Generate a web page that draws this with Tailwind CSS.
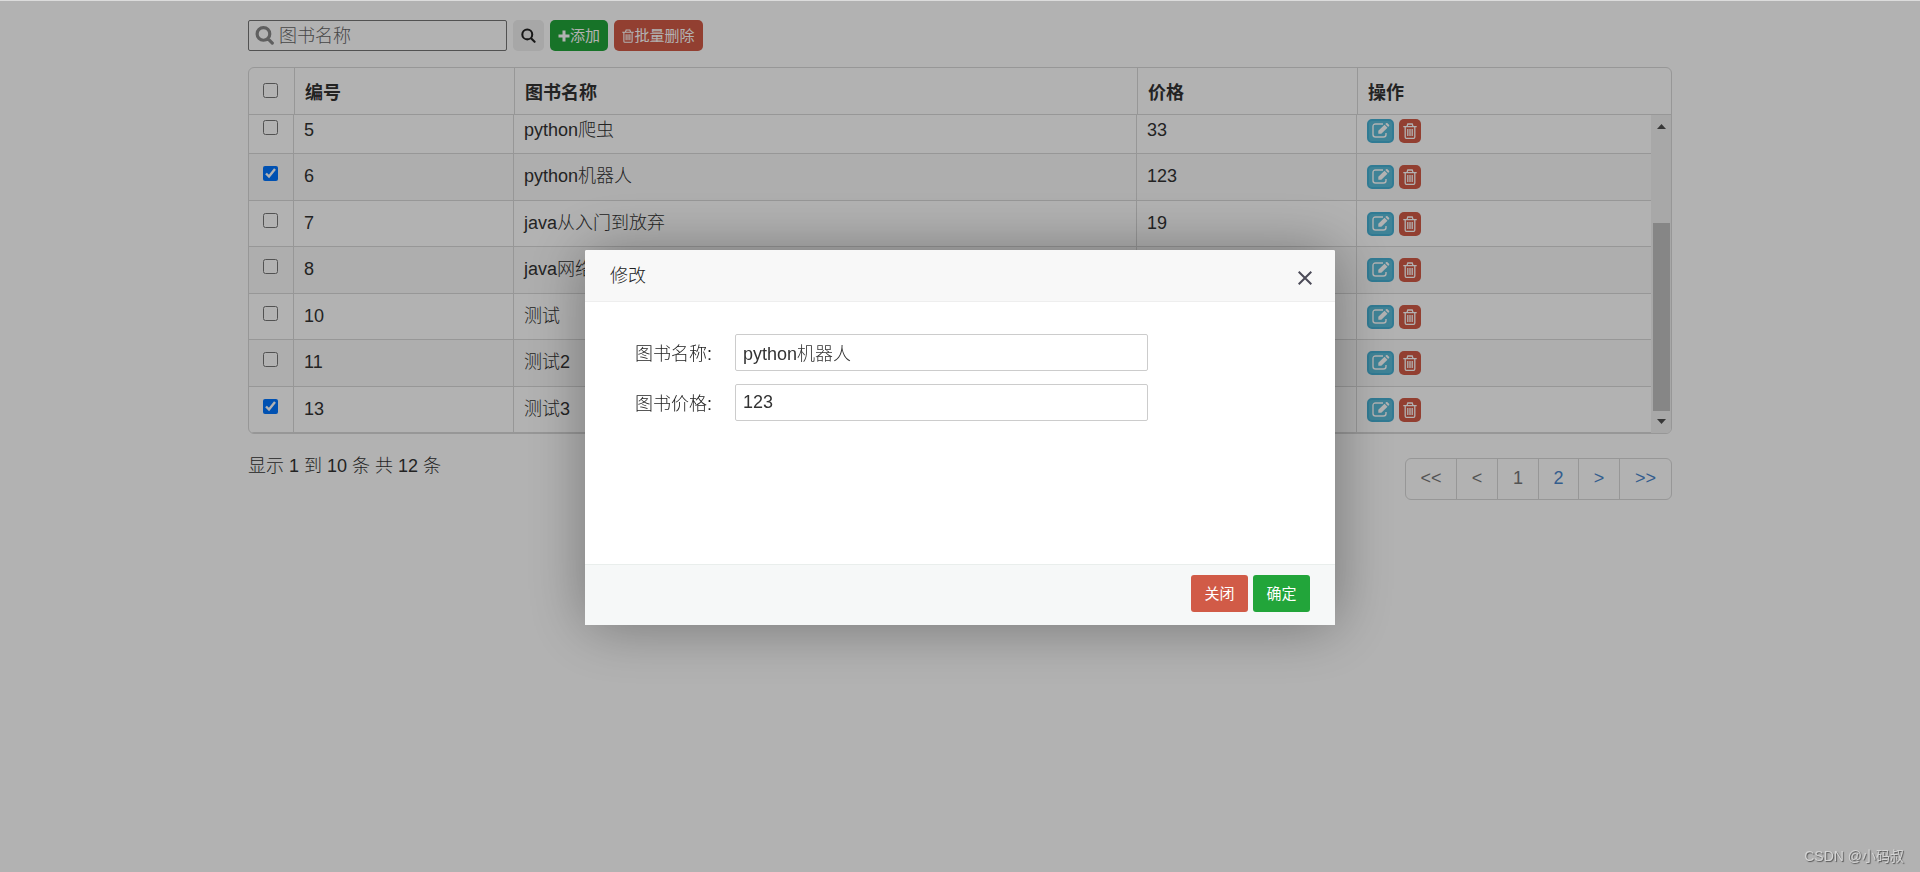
<!DOCTYPE html>
<html lang="zh-CN">
<head>
<meta charset="utf-8">
<meta name="viewport" content="width=device-width, initial-scale=1">
<title>图书管理</title>
<script src="https://cdn.jsdelivr.net/npm/@tailwindcss/browser@4"></script>
</head>
<body class="min-h-screen border-t border-[#dcdcdc] bg-white font-['Liberation_Sans','Noto_Sans_CJK_SC',sans-serif] text-lg leading-6 text-[#333]">

<svg class="hidden" aria-hidden="true">
  <symbol id="search" viewBox="0 0 18 18"><path fill="none" stroke="currentColor" stroke-width="3" stroke-linecap="round" d="M14 7.500a6 6 0 1 1-12 0 6 6 0 0 1 12 0zM12.400 12.200l4 4"/></symbol>
  <symbol id="search-thin" viewBox="0 0 16 16"><path fill="none" stroke="currentColor" stroke-width="2.200" stroke-linecap="round" d="M12 6.800a5.300 5.300 0 1 1-10.600 0 5.300 5.300 0 0 1 10.600 0zM10.700 10.900l3.800 3.800"/></symbol>
  <symbol id="plus" viewBox="0 0 12 12"><path fill="currentColor" d="M4.500.5h3v4h4v3h-4v4h-3v-4h-4v-3h4z"/></symbol>
  <symbol id="trash" viewBox="0 0 14 16"><path fill="none" stroke="currentColor" stroke-width="1.300" d="M.3 3.600h13.400M4 3.400 4.800 1h4.400l.8 2.400M2.200 3.600V14q0 1.300 1.200 1.300h7.200q1.200 0 1.200-1.300V3.600M4.800 6v7M7 6v7M9.200 6v7"/></symbol>
  <symbol id="edit" viewBox="0 0 18 15"><path fill="none" stroke="currentColor" stroke-width="1.400" d="M11 1H3.500Q1 1 1 3.500v8Q1 14 3.500 14h8q2.500 0 2.500-2.500V10"/><path fill="currentColor" d="m6.300 7.700 6.200-6 3 3-6.200 6.100h-3zM13.300 1l.8-.8q.7-.5 1.400 0l1.500 1.500q.6.700 0 1.400l-.8.800z"/></symbol>
</svg>

<main class="mx-auto w-full max-w-[1424px] pt-[19px]">
  <form class="flex items-center gap-[6px]">
    <label class="flex h-[31px] w-[259px] items-center gap-[5px] rounded-xs border border-[#767676] px-[6px] text-[#888]">
      <svg class="size-[19px] shrink-0"><use href="#search"/></svg>
      <input type="text" aria-label="图书名称" placeholder="图书名称" class="min-w-0 flex-1 font-light outline-none placeholder:text-[#666]">
    </label>
    <button type="button" aria-label="搜索" class="grid size-[31px] place-items-center rounded-[5px] bg-[#efefef] text-[#222]"><svg class="size-[15px]"><use href="#search-thin"/></svg></button>
    <button type="button" class="flex h-[31px] w-[58px] items-center justify-center rounded-[5px] bg-[#22a53a] text-[15px] text-white"><svg class="size-[12px]"><use href="#plus"/></svg>添加</button>
    <button type="button" class="flex h-[31px] w-[89px] items-center justify-center rounded-[5px] bg-[#d15b47] text-[15px] text-white"><svg class="h-[14px] w-[12px]"><use href="#trash"/></svg>批量删除</button>
  </form>

  <section class="mt-4 overflow-hidden rounded-md border border-[#d8d8d8]">
    <table class="w-full table-fixed border-separate border-spacing-0 text-left">
      <colgroup><col class="w-[46px]"><col class="w-[220px]"><col><col class="w-[220px]"><col class="w-[313px]"></colgroup>
      <thead>
        <tr class="h-[47px] *:border-b *:border-r *:border-[#d8d8d8] *:pt-1 *:pl-[10px] *:last:border-r-0">
          <th class="align-top"><input type="checkbox" aria-label="全选" class="mt-[11px] ml-[4px] block size-[15px]"></th>
          <th>编号</th><th>图书名称</th><th>价格</th><th>操作</th>
        </tr>
      </thead>
    </table>
    <div class="flex">
      <div class="flex h-[318px] min-w-0 flex-1 flex-col justify-end overflow-hidden">
        <table class="w-full shrink-0 table-fixed border-separate border-spacing-0">
          <colgroup><col class="w-[45px]"><col class="w-[220px]"><col><col class="w-[220px]"><col class="w-[294px]"></colgroup>
          <tbody id="rows"></tbody>
        </table>
      </div>
      <div class="flex w-5 flex-col items-center bg-[#f1f1f1] py-[9px]" aria-hidden="true">
        <svg class="h-[5px] w-[9px]" viewBox="0 0 9 5"><path fill="#505050" d="M4.500 0 9 5H0z"/></svg>
        <div class="mt-auto mb-[8px] h-[188px] w-[17px] bg-[#c1c1c1]"></div>
        <svg class="h-[5px] w-[9px]" viewBox="0 0 9 5"><path fill="#505050" d="M4.500 5 9 0H0z"/></svg>
      </div>
    </div>
  </section>

  <div class="flex items-start justify-between">
    <p class="mt-5 font-light">显示 1 到 10 条 共 12 条</p>
    <nav aria-label="分页" class="mt-6 flex divide-x divide-[#d8d8d8] rounded-md border border-[#d8d8d8] text-center text-[#777] *:pt-[7px] *:pb-[9px]">
      <a href="#" class="w-[51px]">&lt;&lt;</a><a href="#" class="w-[41px]">&lt;</a><a href="#" class="w-[41px]">1</a><a href="#" class="w-[40px] text-[#4a86cc]">2</a><a href="#" class="w-[41px] text-[#4a86cc]">&gt;</a><a href="#" class="w-[51px] text-[#4a86cc]">&gt;&gt;</a>
    </nav>
  </div>
</main>

<div class="fixed inset-x-0 top-px bottom-0 grid place-items-center bg-black/30 pt-[2px]">
  <div role="dialog" aria-labelledby="dlg" class="flex h-[375px] w-[750px] flex-col rounded-xs bg-white shadow-[1px_1px_60px_rgba(0,0,0,0.35)]">
    <header class="flex h-[52px] items-center justify-between rounded-t-xs border-b border-[#eee] bg-[#f8f8f8] pr-[23px] pl-[25px]">
      <h2 id="dlg" class="font-light text-[#222]">修改</h2>
      <button type="button" aria-label="关闭窗口" class="mt-1 size-[14px] text-[#4c4b58]"><svg viewBox="0 0 14 14" class="size-[14px]"><path fill="none" stroke="currentColor" stroke-width="2" d="m.7.700 12.600 12.600m0-12.600L.7 13.300"/></svg></button>
    </header>
    <form class="flex flex-1 flex-col gap-[13px] pt-8 pl-[50px]">
      <div class="flex h-[37px] items-center"><label for="name" class="w-[100px] pt-[2px] whitespace-nowrap font-light text-[#222]">图书名称:</label><input id="name" type="text" value="python机器人" class="h-[37px] w-[413px] rounded-xs border border-[#ccc] px-[7px] pb-[2px] font-light"></div>
      <div class="flex h-[37px] items-center"><label for="price" class="w-[100px] pt-[2px] whitespace-nowrap font-light text-[#222]">图书价格:</label><input id="price" type="text" value="123" class="h-[37px] w-[413px] rounded-xs border border-[#ccc] px-[7px] font-light"></div>
    </form>
    <footer class="flex h-[61px] items-center justify-end gap-[5px] border-t border-[#e9eeec] bg-[#f6f8f8] px-[25px] pb-[3px] text-[15px] text-white">
      <button type="button" class="h-[37px] w-[57px] rounded-[3px] bg-[#d15b47]">关闭</button>
      <button type="button" class="h-[37px] w-[57px] rounded-[3px] bg-[#22a53a]">确定</button>
    </footer>
  </div>
  <p class="absolute right-4 bottom-1 text-sm leading-6 text-[#d4d4d4] [text-shadow:1px_1px_1px_#555]">CSDN @小码叔</p>
</div>

<script>
const books = [
  [5, "python爬虫", 33], [6, "python机器人", 123, true], [7, "java从入门到放弃", 19],
  [8, "java网络", 45], [10, "测试", 20], [11, "测试2", 22], [13, "测试3", 30, true]
];
document.getElementById("rows").innerHTML = books.map(([id, name, price, checked], i) => `
  <tr class="${i % 2 ? "bg-[#f9f9f9] h-[47px]" : "h-[46px]"} *:border-b *:border-r *:border-[#d8d8d8] *:pl-[10px] *:pt-[10px] *:align-top *:font-light *:last:border-r-0">
    <td><input type="checkbox" aria-label="选择 ${id}" ${checked ? "checked" : ""} class="mt-[2px] ml-[4px] block size-[15px] accent-[#0075ff]"></td>
    <td>${id}</td><td>${name}</td><td>${price}</td>
    <td><div class="mt-px flex gap-[5px]">
      <button type="button" aria-label="编辑" class="grid h-6 w-[27px] place-items-center rounded-[5px] border-2 border-[#46b0d4] bg-[#5bbcd8] text-white"><svg class="mb-px h-[15px] w-[18px]"><use href="#edit"/></svg></button>
      <button type="button" aria-label="删除" class="grid h-6 w-[22px] place-items-center rounded-[5px] bg-[#d15b47] text-white"><svg class="h-4 w-[14px]"><use href="#trash"/></svg></button>
    </div></td>
  </tr>`).join("");
</script>
</body>
</html>
